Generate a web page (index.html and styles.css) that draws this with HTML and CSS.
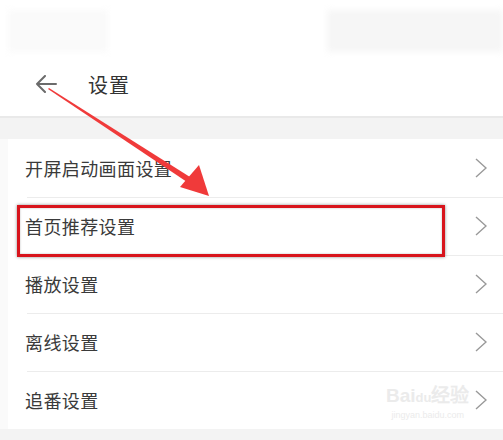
FILE: index.html
```html
<!DOCTYPE html>
<html lang="zh-CN">
<head>
<meta charset="utf-8">
<link rel="stylesheet" href="styles.css">
</head>
<body>
<div class="page">
  <div class="status">
    <div class="blur blur-left"></div>
    <div class="blur blur-right"></div>
  </div>
  <div class="header">
    <svg class="back" width="22" height="18" viewBox="0 0 22 18">
      <path d="M21 9H2M10 1L2 9l8 8" fill="none" stroke="#6b6b6b" stroke-width="2" stroke-linecap="round" stroke-linejoin="round"/>
    </svg>
    <span class="title">设置</span>
  </div>
  <div class="band"></div>
  <ul class="list">
    <li class="row"><span class="label">开屏启动画面设置</span><svg class="chev" width="12" height="20" viewBox="0 0 12 20"><path d="M1 1l10 9-10 9" fill="none" stroke="#999" stroke-width="1.4"/></svg></li>
    <li class="row"><span class="label">首页推荐设置</span><svg class="chev" width="12" height="20" viewBox="0 0 12 20"><path d="M1 1l10 9-10 9" fill="none" stroke="#999" stroke-width="1.4"/></svg></li>
    <li class="row"><span class="label">播放设置</span><svg class="chev" width="12" height="20" viewBox="0 0 12 20"><path d="M1 1l10 9-10 9" fill="none" stroke="#999" stroke-width="1.4"/></svg></li>
    <li class="row"><span class="label">离线设置</span><svg class="chev" width="12" height="20" viewBox="0 0 12 20"><path d="M1 1l10 9-10 9" fill="none" stroke="#999" stroke-width="1.4"/></svg></li>
    <li class="row"><span class="label">追番设置</span><svg class="chev" width="12" height="20" viewBox="0 0 12 20"><path d="M1 1l10 9-10 9" fill="none" stroke="#999" stroke-width="1.4"/></svg></li>
  </ul>
  <div class="bottom"></div>

  <div class="highlight"></div>
  <svg class="pointer" width="503" height="440" viewBox="0 0 503 440">
    <polygon points="48,89 49,88 190,177 187,182" fill="#f03a3a"/>
    <polygon points="180,187 199,165 209,196" fill="#f03a3a"/>
  </svg>
  <div class="watermark">
    <span class="wm-brand">Bai<span class="wm-du">du</span>经验</span>
    <span class="wm-url">jingyan.baidu.com</span>
  </div>
</div>
</body>
</html>
```

FILE: styles.css
```css
* { box-sizing: border-box; }
html, body { margin: 0; padding: 0; }
body {
  background: #fff;
  font-family: "Noto Sans CJK SC", "Noto Sans", sans-serif;
  color: #333;
}
.page {
  position: relative;
  width: 503px;
  height: 440px;
  overflow: hidden;
  background: #fff;
}
.status {
  height: 52px;
  padding-top: 10px;
  display: flex;
  justify-content: space-between;
}
.blur {
  height: 42px;
  background: #fafafa;
  filter: blur(3px);
}
.blur-left { width: 100px; margin-left: 8px; }
.blur-right { width: 176px; background: #f6f6f6; }
.header {
  height: 64px;
  display: flex;
  align-items: center;
  padding-left: 35px;
}
.back { margin-top: -1px; }
.title {
  margin-left: 31px;
  font-size: 20px;
  color: #333;
  letter-spacing: 1px;
}
.band {
  height: 23px;
  background: #f3f3f3;
  border-top: 2px solid #e9e9e9;
}
.list {
  list-style: none;
  margin: 0;
  padding: 0 0 0 8px;
  background: #fafafa;
}
.row {
  height: 58px;
  display: flex;
  align-items: center;
  justify-content: space-between;
  padding: 0 16px 0 17px;
  background: #fff;
  position: relative;
}
.row + .row::before {
  content: "";
  position: absolute;
  top: 0;
  left: 19px;
  right: 0;
  height: 1px;
  background: #ececec;
}
.label {
  font-size: 18px;
  color: #3a3a3a;
  letter-spacing: 0.4px;
}
.chev { display: block; }
.bottom {
  height: 20px;
  background: #f3f3f3;
}
.highlight {
  position: absolute;
  left: 17px;
  top: 205px;
  width: 428px;
  height: 52px;
  border: 3px solid #d8141c;
  box-shadow: 0 0 3px rgba(0, 0, 0, 0.45), inset 0 0 2px rgba(0, 0, 0, 0.3);
}
.pointer {
  position: absolute;
  left: 0;
  top: 0;
}
.watermark {
  position: absolute;
  left: 386px;
  top: 385px;
  display: flex;
  flex-direction: column;
  align-items: center;
  color: #ebebeb;
  font-family: "Liberation Sans", sans-serif;
}
.wm-brand { font-size: 19px; font-weight: bold; line-height: 22px; }
.wm-du { font-size: 13px; }
.wm-url { font-size: 9px; line-height: 12px; }
```
